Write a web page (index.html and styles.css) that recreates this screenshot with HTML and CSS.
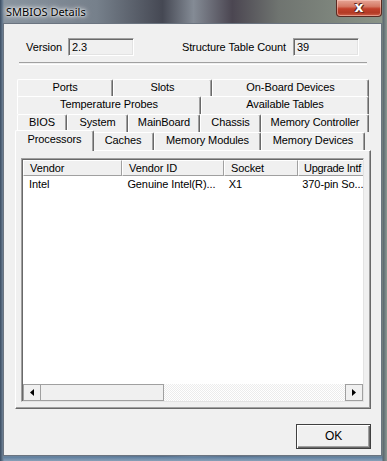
FILE: index.html
```html
<!DOCTYPE html>
<html lang="en">
<head>
  <meta charset="UTF-8" />
  <title>SMBIOS Details</title>
  <link rel="stylesheet" href="styles.css">
</head>
<body>
  <div class="frame">
    <div class="titlebar">
      <span class="title">SMBIOS Details</span>
      <div class="close"><span>x</span></div>
    </div>

    <div class="client">
      <div class="info">
        <div class="field">
          <span class="label">Version</span>
          <div class="box box-version">2.3</div>
        </div>
        <div class="field">
          <span class="label">Structure Table Count</span>
          <div class="box">39</div>
        </div>
      </div>

      <div class="sep"></div>

      <div class="tabs">
        <div class="row">
          <div class="tab" style="width:96px">Ports</div>
          <div class="tab" style="width:99px">Slots</div>
          <div class="tab" style="width:157px">On-Board Devices</div>
        </div>
        <div class="row">
          <div class="tab" style="width:184px">Temperature Probes</div>
          <div class="tab" style="width:168px">Available Tables</div>
        </div>
        <div class="row">
          <div class="tab" style="width:50px">BIOS</div>
          <div class="tab" style="width:61px">System</div>
          <div class="tab" style="width:72px">MainBoard</div>
          <div class="tab" style="width:61px">Chassis</div>
          <div class="tab" style="width:108px">Memory Controller</div>
        </div>
        <div class="row">
          <div class="tab active" style="width:79px">Processors</div>
          <div class="tab" style="width:62px">Caches</div>
          <div class="tab" style="width:107px">Memory Modules</div>
          <div class="tab" style="width:104px">Memory Devices</div>
        </div>
      </div>

      <div class="panel">
        <div class="list">
          <div class="list-body">
            <div class="header">
              <div class="col" style="width:99px">Vendor</div>
              <div class="col" style="width:102px">Vendor ID</div>
              <div class="col" style="width:74px">Socket</div>
              <div class="col last">Upgrade Intf</div>
            </div>
            <div class="item">
              <div class="cell" style="width:99px">Intel</div>
              <div class="cell" style="width:102px">Genuine Intel(R)...</div>
              <div class="cell" style="width:74px">X1</div>
              <div class="cell">370-pin So...</div>
            </div>
          </div>
          <div class="hscroll">
            <div class="arrow">
              <svg width="4" height="7" viewBox="0 0 4 7"><path d="M4 0 L0 3.5 L4 7 Z" fill="#000"/></svg>
            </div>
            <div class="thumb"></div>
            <div class="track"></div>
            <div class="arrow">
              <svg width="4" height="7" viewBox="0 0 4 7"><path d="M0 0 L4 3.5 L0 7 Z" fill="#000"/></svg>
            </div>
          </div>
        </div>
      </div>

      <div class="buttons">
        <div class="btn">OK</div>
      </div>
    </div>
  </div>
</body>
</html>
```

FILE: styles.css
```css
body {
  margin: 0;
  width: 387px;
  height: 461px;
  overflow: hidden;
  font-family: 'Liberation Sans', Arial, sans-serif;
  font-size: 11px;
  letter-spacing: -0.1px;
  color: #000;
}

.frame {
  width: 387px;
  height: 461px;
  box-sizing: border-box;
  padding: 0 5px 5px 3px;
  background:
    linear-gradient(90deg, #3a4c62 0px, #6f8296 3px, transparent 4px, transparent 382px, #5a6670 383px, #8c9890 387px),
    linear-gradient(180deg, transparent 455px, #5f7f9f 457px, #8aa0b8 461px),
    linear-gradient(90deg, #8a95a0 0%, #76808b 25%, #454853 42%, #848b95 50%, #4b4651 60%, #6f7470 72%, #8c9689 100%);
}

.titlebar {
  height: 23px;
  display: flex;
  align-items: flex-start;
}

.title {
  font-family: 'Noto Sans', 'Open Sans', sans-serif;
  font-size: 11px;
  line-height: 12px;
  letter-spacing: 0;
  margin: 6px 0 0 3px;
  color: #000;
  text-shadow: 0 0 6px #fff, 0 0 4px #fff, 0 0 2px #fff;
}

.close {
  margin-left: auto;
  width: 44px;
  height: 16px;
  border: 1px solid #5a2a22;
  border-top: none;
  border-radius: 0 0 4px 4px;
  background: linear-gradient(180deg, #e6a596 0%, #d57a66 40%, #c2402b 55%, #b23a25 80%, #d0634b 100%);
  box-shadow: inset 0 0 0 1px rgba(255, 210, 200, 0.5);
  display: flex;
  align-items: center;
  justify-content: center;
}

.close span {
  font-family: 'DejaVu Sans', sans-serif;
  font-weight: bold;
  font-size: 14px;
  line-height: 14px;
  margin-top: -2px;
  color: #fff;
  text-shadow: 0 0 1px #3a1510, 1px 1px 0 #6a2a20, -1px -1px 0 #6a2a20;
}

.client {
  height: 433px;
  box-sizing: border-box;
  background: #f0f0f0;
  border: 1px solid #6b7480;
  padding: 13px 10px 6px 11px;
  display: flex;
  flex-direction: column;
}

.info {
  display: flex;
  justify-content: space-between;
  padding: 0 12px 0 11px;
  height: 20px;
}

.field {
  display: flex;
  align-items: center;
}

.label {
  margin-right: 7px;
}

.box {
  width: 61px;
  height: 16px;
  line-height: 16px;
  border: 1px solid #a0a0a0;
  border-right-color: #fff;
  border-bottom-color: #fff;
  box-shadow: inset 1px 1px 0 #696969, inset -1px -1px 0 #e3e3e3;
  padding-left: 3px;
}

.box-version {
  margin-left: -1px;
}

.sep {
  margin: 5px 4px 0 4px;
  height: 1px;
  border-top: 1px solid #a0a0a0;
  border-bottom: 1px solid #fff;
}

.tabs {
  margin-top: 14px;
  padding: 0 2px;
}

.row {
  display: flex;
  align-items: flex-end;
  height: 18px;
}

.row:nth-child(2) {
  height: 17px;
}

.tab {
  box-sizing: border-box;
  height: 18px;
  line-height: 15px;
  text-align: center;
  background: #f0f0f0;
  border-top: 1px solid #fff;
  border-left: 1px solid #fff;
  border-right: 1px solid #696969;
  border-radius: 2px 2px 0 0;
  box-shadow: inset -1px 0 0 #a0a0a0;
  white-space: nowrap;
}

.tab.active {
  height: 21px;
  margin: 0 -2px -1px -2px;
  position: relative;
  z-index: 2;
  line-height: 17px;
  padding-bottom: 1px;
}

.panel {
  height: 260px;
  box-sizing: border-box;
  border-top: 1px solid #fff;
  border-left: 1px solid #fff;
  border-right: 1px solid #696969;
  border-bottom: 1px solid #696969;
  box-shadow: inset -1px -1px 0 #a0a0a0;
  padding: 7px 6px 6px 5px;
  position: relative;
  z-index: 1;
}

.list {
  height: 100%;
  box-sizing: border-box;
  border: 1px solid #a0a0a0;
  border-right-color: #e3e3e3;
  border-bottom-color: #e3e3e3;
  box-shadow: inset 1px 1px 0 #696969;
  background: #fff;
  display: flex;
  flex-direction: column;
  padding: 1px 0 0 1px;
}

.list-body {
  flex: 1;
}

.header {
  display: flex;
  height: 16px;
}

.col {
  box-sizing: border-box;
  height: 16px;
  line-height: 15px;
  padding-left: 6px;
  background: #f0f0f0;
  border-top: 1px solid #fff;
  border-left: 1px solid #fff;
  border-right: 1px solid #a0a0a0;
  border-bottom: 1px solid #a0a0a0;
  white-space: nowrap;
  overflow: hidden;
}

.col.last {
  flex: 1;
  border-right: none;
  padding-left: 5px;
  letter-spacing: -0.3px;
}

.item {
  display: flex;
  height: 17px;
  line-height: 17px;
}

.cell {
  padding-left: 6px;
  box-sizing: border-box;
  white-space: nowrap;
  overflow: hidden;
}

.hscroll {
  display: flex;
  height: 17px;
}

.arrow {
  width: 18px;
  box-sizing: border-box;
  border: 1px solid #a0a0a0;
  background: #f0f0f0;
  display: flex;
  align-items: center;
  justify-content: center;
}

.thumb {
  width: 123px;
  box-sizing: border-box;
  border: 1px solid #a0a0a0;
  border-left: none;
  background: #f0f0f0;
}

.track {
  flex: 1;
  background-image: repeating-conic-gradient(#fff 0 25%, #ececec 0 50%);
  background-size: 2px 2px;
}

.buttons {
  display: flex;
  justify-content: flex-end;
  margin-top: 15px;
}

.btn {
  width: 75px;
  height: 25px;
  box-sizing: border-box;
  border: 1px solid #404040;
  box-shadow: inset 1px 1px 0 #fff, inset -1px -1px 0 #696969, inset -2px -2px 0 #a0a0a0;
  background: #f0f0f0;
  text-align: center;
  line-height: 23px;
  font-size: 12px;
}
```
